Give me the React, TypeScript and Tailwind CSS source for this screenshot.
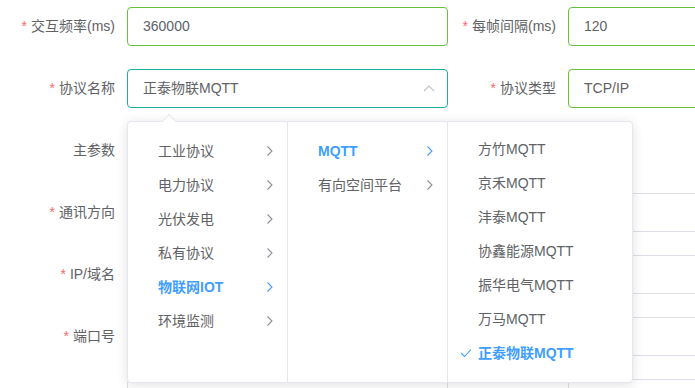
import React from "react";

const font = { fontFamily: '"Liberation Sans", "Noto Sans CJK SC", sans-serif' };

function Label({ text, req, w }: { text?: string; req?: boolean; w: string }) {
  return (
    <div className={`${w} shrink-0 pr-3 flex items-center justify-end text-[14px] text-[#606266]`}>
      {req && <span className="text-[#f56c6c] mr-[4px]">*</span>}
      {text && <span>{text}</span>}
    </div>
  );
}

function Box({ value, border, w, children }: { value?: string; border: string; w: string; children?: React.ReactNode }) {
  return (
    <div className={`${w} shrink-0 h-[39px] rounded-[4px] border ${border} bg-white flex items-center pl-[15px] pr-3 text-[14px] text-[#606266]`}>
      <span className="flex-1">{value}</span>
      {children}
    </div>
  );
}

function Chev({ active }: { active?: boolean }) {
  return (
    <svg width="8" height="12" viewBox="0 0 8 12" className="absolute right-[13px] top-1/2 -translate-y-1/2">
      <polyline points="1.5,1.5 6,6 1.5,10.5" fill="none" stroke={active ? "#409eff" : "#8d9099"} strokeWidth="1.1" />
    </svg>
  );
}

function Item({ text, active, arrow, check }: { text: string; active?: boolean; arrow?: boolean; check?: boolean }) {
  return (
    <div
      className={`relative h-[34px] flex items-center pl-[30px] text-[14px] ${active ? "text-[#409eff] font-bold" : "text-[#606266]"}`}
    >
      {check && (
        <svg width="12" height="10" viewBox="0 0 12 10" className="absolute left-[12px] top-1/2 -translate-y-1/2">
          <polyline points="1,5 4.5,8.5 11,1.5" fill="none" stroke="#409eff" strokeWidth="1.1" />
        </svg>
      )}
      {text}
      {arrow && <Chev active={active} />}
    </div>
  );
}

export default function App() {
  const green = "border-[#67c23a]";
  const gray = "border-[#dcdfe6]";
  return (
    <div className="relative w-[695px] h-[388px] overflow-hidden bg-white" style={font}>
      <div className="flex flex-col pt-[7px] gap-[23px]">
        <div className="flex h-[39px]">
          <Label text="交互频率(ms)" req w="w-[127px]" />
          <Box value="360000" border={green} w="w-[321px]" />
          <Label text="每帧间隔(ms)" req w="w-[120px]" />
          <Box value="120" border={green} w="w-[200px]" />
        </div>
        <div className="flex h-[39px]">
          <Label text="协议名称" req w="w-[127px]" />
          <Box value="正泰物联MQTT" border="border-[#1cae9f]" w="w-[321px]">
            <svg width="12" height="7" viewBox="0 0 12 7">
              <polyline points="1,6 6,1 11,6" fill="none" stroke="#c0c4cc" strokeWidth="1.1" />
            </svg>
          </Box>
          <Label text="协议类型" req w="w-[120px]" />
          <Box value="TCP/IP" border={green} w="w-[200px]" />
        </div>
        <div className="flex h-[39px]">
          <Label text="主参数" w="w-[127px]" />
        </div>
        <div className="flex h-[39px]">
          <Label text="通讯方向" req w="w-[127px]" />
          <Box border={gray} w="w-[321px]" />
          <Label w="w-[120px]" />
          <Box border={gray} w="w-[200px]" />
        </div>
        <div className="flex h-[39px]">
          <Label text="IP/域名" req w="w-[127px]" />
          <Box border={gray} w="w-[321px]" />
          <Label w="w-[120px]" />
          <Box border={gray} w="w-[200px]" />
        </div>
        <div className="flex h-[39px]">
          <Label text="端口号" req w="w-[127px]" />
          <Box border={gray} w="w-[321px]" />
          <Label w="w-[120px]" />
          <Box border={gray} w="w-[200px]" />
        </div>
        <div className="flex h-[39px]">
          <Label w="w-[127px]" />
          <Box border={gray} w="w-[321px]" />
          <Label w="w-[120px]" />
          <Box border={gray} w="w-[200px]" />
        </div>
      </div>

      {/* cascader dropdown */}
      <div className="absolute left-[127px] top-[121px] w-[506px] h-[262px] bg-white border border-[#e4e7ed] rounded-[4px] shadow-[0_2px_12px_0_rgba(0,0,0,0.12)] flex">
        <div className="absolute -top-[6px] left-[36px] w-[10px] h-[10px] bg-white border-t border-l border-[#e4e7ed] rotate-45" />
        <div className="relative w-[160px] h-full border-r border-[#e4e7ed] pt-[12px]">
          <Item text="工业协议" arrow />
          <Item text="电力协议" arrow />
          <Item text="光伏发电" arrow />
          <Item text="私有协议" arrow />
          <Item text="物联网IOT" arrow active />
          <Item text="环境监测" arrow />
        </div>
        <div className="relative w-[160px] h-full border-r border-[#e4e7ed] pt-[12px]">
          <Item text="MQTT" arrow active />
          <Item text="有向空间平台" arrow />
        </div>
        <div className="relative flex-1 h-full pt-[10px]">
          <Item text="方竹MQTT" />
          <Item text="京禾MQTT" />
          <Item text="沣泰MQTT" />
          <Item text="协鑫能源MQTT" />
          <Item text="振华电气MQTT" />
          <Item text="万马MQTT" />
          <Item text="正泰物联MQTT" active check />
        </div>
      </div>
    </div>
  );
}
